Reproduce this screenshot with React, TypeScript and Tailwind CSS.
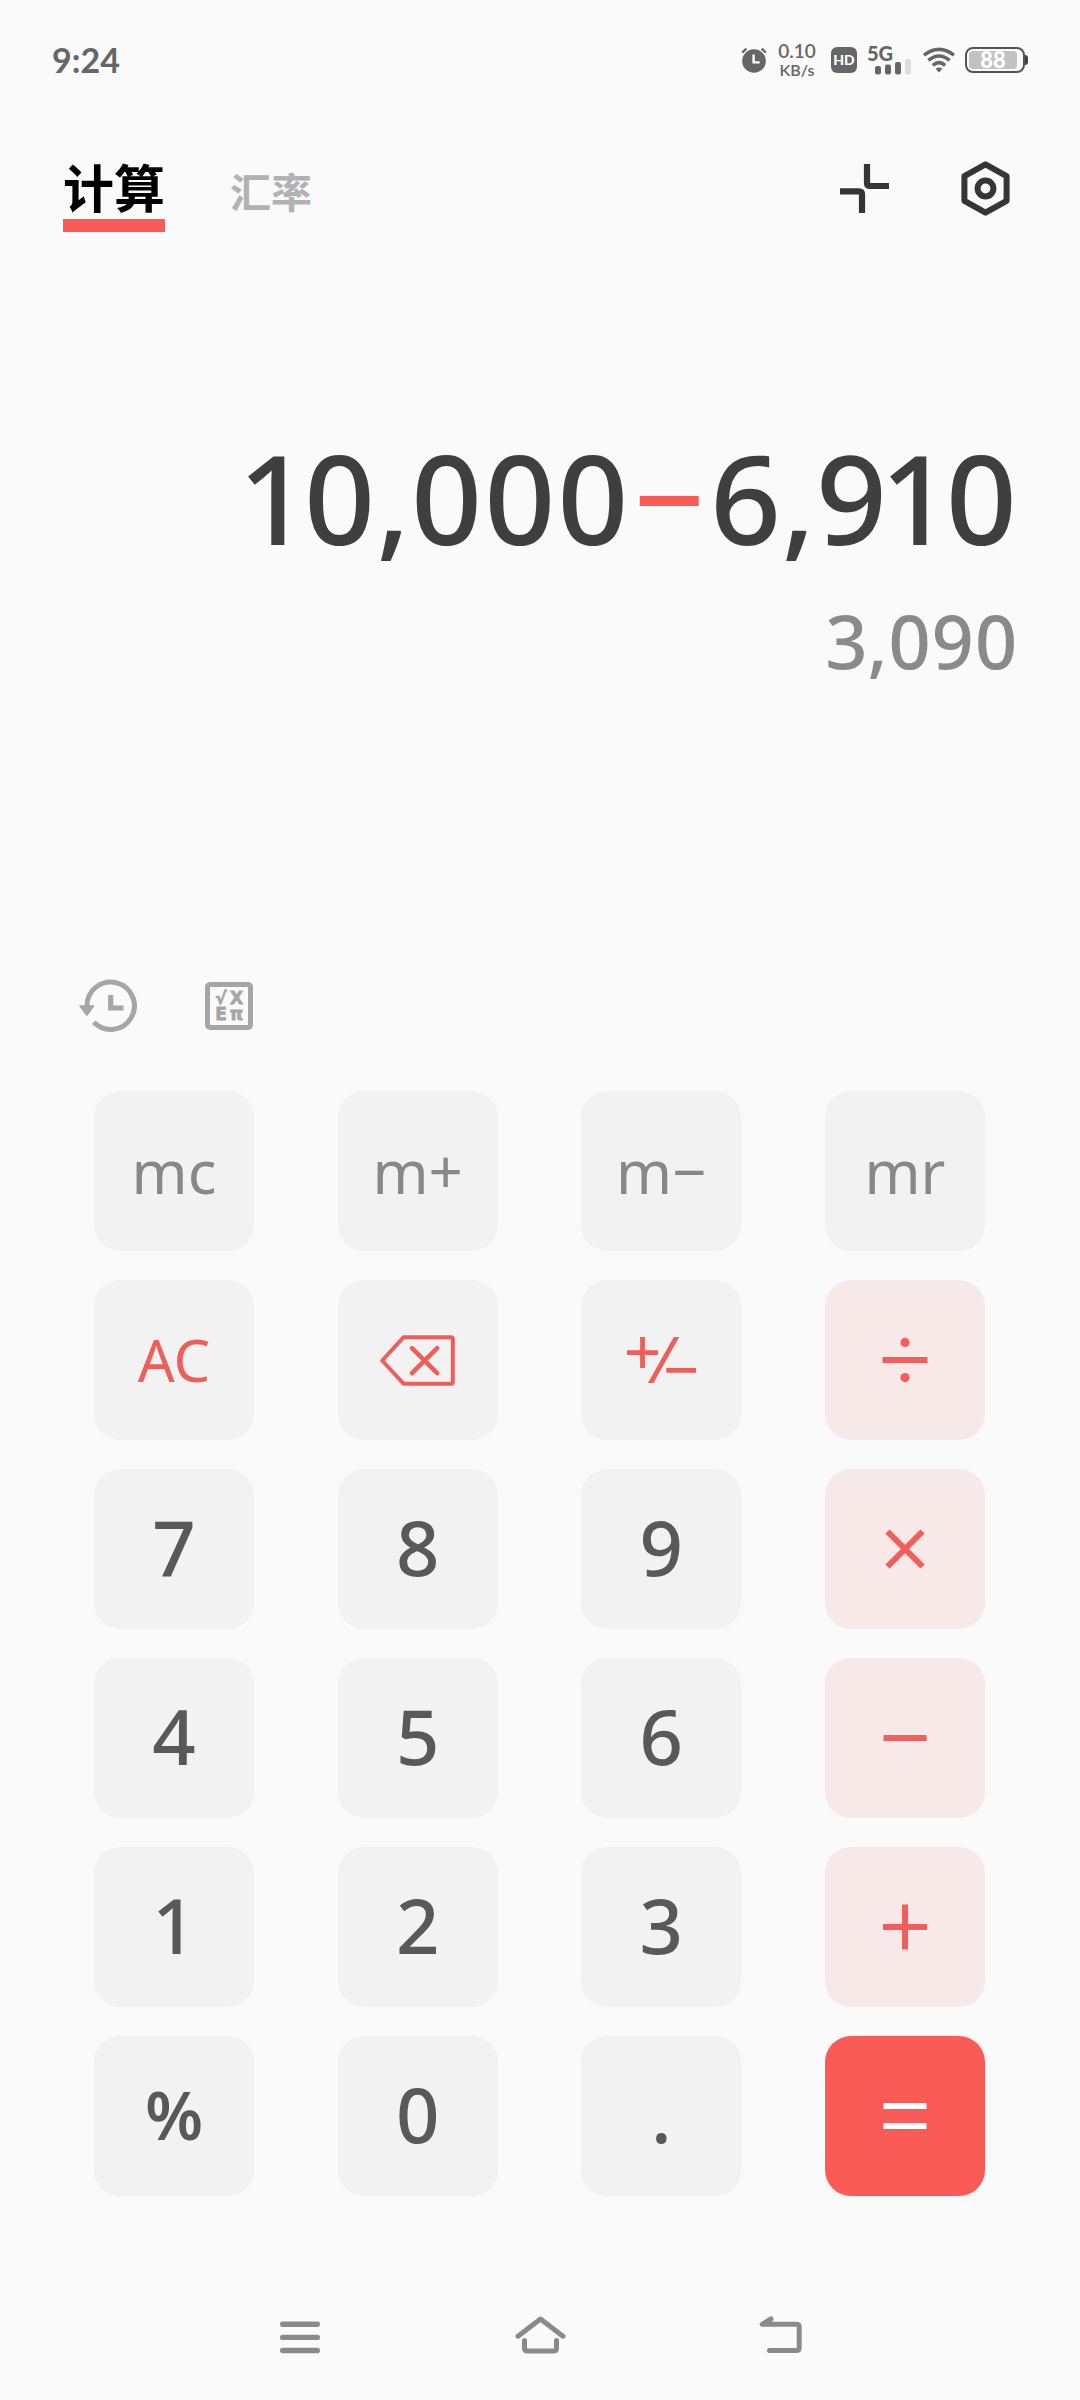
import type { ReactNode } from "react"
import clsx from "clsx"

type KeyKind = "memory" | "action" | "digit" | "percent" | "operator" | "equals"

type CalcKey = {
    label: string
    kind: KeyKind
    content?: ReactNode
}

const keyStyles: Record<KeyKind, string> = {
    memory: "bg-[#f2f2f2] text-[#888888] text-[60px]",
    action: "bg-[#f2f2f2] text-[#ee5e5b] text-[58px]",
    digit: "bg-[#f2f2f2] text-[#595959] font-medium text-[76px] pb-1",
    percent: "bg-[#f2f2f2] text-[#595959] font-semibold text-[66px] pb-1",
    operator: "bg-[#f7e9e8] text-[#f25e5b]",
    equals: "bg-[#fb5b57] text-white",
}

function Sign({ d, children }: { d: string; children?: ReactNode }) {
    return (
        <svg width="46" height="46" viewBox="0 0 46 46" fill="none" stroke="currentColor" strokeWidth="6" aria-hidden="true">
            <path d={d} />
            {children}
        </svg>
    )
}

function BackspaceIcon() {
    return (
        <svg width="75" height="51" viewBox="0 0 75 51" fill="none" stroke="currentColor" strokeWidth="4" strokeLinecap="round" strokeLinejoin="round" aria-hidden="true">
            <path d="M2.2 25.5 23.5 2.3H71Q72.8 2.3 72.8 4V47Q72.8 48.7 71 48.7H23.5Z" />
            <path d="M32 13.2 57.2 38.2M57.2 13.2 32 38.2" strokeWidth="4.6" />
        </svg>
    )
}

function PlusMinusIcon() {
    return (
        <svg width="69" height="46" viewBox="0 0 69 46" fill="none" stroke="currentColor" strokeWidth="4.8" aria-hidden="true">
            <path d="M0 15.7H31M15.5 0V31M39.3 33.3H69M50.6-2 22.6 48" />
        </svg>
    )
}

const keys: CalcKey[] = [
    { label: "mc", kind: "memory" },
    { label: "m+", kind: "memory" },
    { label: "m−", kind: "memory" },
    { label: "mr", kind: "memory" },
    { label: "AC", kind: "action" },
    { label: "退格", kind: "action", content: <BackspaceIcon /> },
    { label: "正负", kind: "action", content: <PlusMinusIcon /> },
    {
        label: "除",
        kind: "operator",
        content: (
            <Sign d="M0.5 23H45.5">
                <circle cx="23" cy="5.4" r="4.6" fill="currentColor" stroke="none" />
                <circle cx="23" cy="40.6" r="4.6" fill="currentColor" stroke="none" />
            </Sign>
        ),
    },
    { label: "7", kind: "digit" },
    { label: "8", kind: "digit" },
    { label: "9", kind: "digit" },
    { label: "乘", kind: "operator", content: <Sign d="M5.5 5.5 40.5 40.5M40.5 5.5 5.5 40.5" /> },
    { label: "4", kind: "digit" },
    { label: "5", kind: "digit" },
    { label: "6", kind: "digit" },
    { label: "减", kind: "operator", content: <Sign d="M1.5 23H44.5" /> },
    { label: "1", kind: "digit" },
    { label: "2", kind: "digit" },
    { label: "3", kind: "digit" },
    { label: "加", kind: "operator", content: <Sign d="M1 23H45M23 0.5V45.5" /> },
    { label: "%", kind: "percent" },
    { label: "0", kind: "digit" },
    { label: ".", kind: "digit" },
    { label: "等于", kind: "equals", content: <Sign d="M1.5 13H44.5M1.5 33H44.5" /> },
]

function StatusBar() {
    return (
        <div className="h-[120px] px-[52px] flex items-center justify-between text-[#666666] font-['Lato',sans-serif]">
            <span className="text-[34px] leading-10 font-bold">9:24</span>
            <div className="flex items-center">
                <svg width="26" height="26" viewBox="0 0 26 26" aria-label="闹钟">
                    <circle cx="13" cy="14" r="11.8" fill="#666666" />
                    <path d="M1.2 5.6 5.4 1.6M24.8 5.6 20.6 1.6" stroke="#666666" strokeWidth="2.2" />
                    <path d="M12.6 7.5V15.4H18.6" fill="none" stroke="#ffffff" strokeWidth="2.4" />
                </svg>
                <div className="w-10 ml-[10px] flex flex-col items-center font-semibold">
                    <span className="text-[19px] leading-5">0.10</span>
                    <span className="text-[16px] leading-[18px]">KB/s</span>
                </div>
                <span className="ml-[14px] w-[26px] h-[26px] rounded-md bg-[#666666] text-white text-[14px] leading-none font-black flex items-center justify-center">HD</span>
                <div className="ml-[10px] w-11 h-[30px] relative">
                    <span className="absolute left-0 top-0 text-[20px] leading-4 font-black">5G</span>
                    <svg className="absolute right-0 bottom-0" width="36" height="17" viewBox="0 0 36 17" aria-label="信号">
                        <rect x="0" y="8" width="6" height="8.500" rx="2" fill="#666666" />
                        <rect x="10" y="6.500" width="6" height="10" rx="2" fill="#666666" />
                        <rect x="20" y="4" width="6" height="12.500" rx="2" fill="#666666" />
                        <rect x="30" y="1" width="6" height="15.500" rx="2" fill="#dddddd" />
                    </svg>
                </div>
                <svg className="ml-3" width="32" height="26" viewBox="0 0 32 26" fill="none" stroke="#666666" strokeWidth="3.600" aria-label="无线网络">
                    <path d="M1 8.200Q16-3.600 31 8.200M5.400 13.400Q16 4.600 26.600 13.400M9.800 18.400Q16 13 22.200 18.400" />
                    <path d="M12.600 21.800Q16 19.400 19.400 21.800L16 25.400Z" fill="#666666" stroke="none" />
                </svg>
                <div className="ml-[10px] flex items-center">
                    <div className="w-[60px] h-[26px] rounded-lg border-2 border-[#555555] p-[2px]">
                        <div className="w-12 h-full rounded bg-[#c2c2c2] text-white text-[22px] leading-[18px] font-black text-center">88</div>
                    </div>
                    <div className="w-[3px] h-[10px] rounded-r-sm bg-[#444444]" />
                </div>
            </div>
        </div>
    )
}

function Header() {
    return (
        <header className="pt-[39px] pl-[63px] pr-[70px] flex items-start justify-between">
            <nav className="flex items-baseline gap-[65px] font-bold font-['Noto_Sans_CJK_SC',sans-serif]">
                <button className="pb-[6px] text-[51px] leading-[54px] text-black border-b-[13px] border-[#fb5b57]">计算</button>
                <button className="text-[41px] leading-[54px] text-[#b2b2b2]">汇率</button>
            </nav>
            <div className="h-[58px] flex items-center gap-[72px] text-[#353535]">
                <button aria-label="小窗">
                    <svg width="49" height="49" viewBox="0 0 49 49" fill="none" stroke="currentColor" strokeWidth="6.2">
                        <path d="M27 0V19Q27 22 30 22H49M0 27.300H19Q22 27.300 22 30.300V49" />
                    </svg>
                </button>
                <button aria-label="设置">
                    <svg width="49" height="55" viewBox="0 0 49 55" fill="none" stroke="currentColor" strokeWidth="6" strokeLinejoin="round">
                        <path d="M24.500 3.400 45.600 15.200V39.800L24.500 51.600 3.400 39.800V15.200Z" />
                        <circle cx="24.500" cy="27.500" r="7.900" />
                    </svg>
                </button>
            </div>
        </header>
    )
}

function Toolbar() {
    return (
        <div className="pl-[79px] flex items-center gap-[68px] text-[#a6a6a6]">
            <button aria-label="历史记录">
                <svg width="58" height="54" viewBox="0 0 58 54" fill="none" stroke="currentColor" strokeWidth="5">
                    <path d="M8 27.500V26.700A23.700 23.700 0 1 1 14.800 43.300" />
                    <path d="M.6 26.200H15.200Q15.800 26.200 15.500 27L8.600 36.400Q7.800 37.200 7 36.400L.2 27Q0 26.200.6 26.200Z" fill="currentColor" stroke="none" />
                    <path d="M31.700 16V29H44.500" strokeWidth="5.200" />
                </svg>
            </button>
            <button aria-label="科学计算">
                <svg width="48" height="48" viewBox="0 0 48 48" fill="currentColor" stroke="currentColor" className="font-['DejaVu_Sans',sans-serif] font-bold text-[17px]">
                    <rect x="2.500" y="2.500" width="43" height="43" rx="2.500" fill="none" strokeWidth="5" />
                    <g strokeWidth="0.8">
                        <text x="16" y="22" textAnchor="middle">√</text>
                        <text x="31.500" y="22" textAnchor="middle">X</text>
                        <text x="16" y="38" textAnchor="middle">E</text>
                        <text x="31.500" y="38" textAnchor="middle">π</text>
                    </g>
                </svg>
            </button>
        </div>
    )
}

function NavBar() {
    return (
        <nav className="mt-[74px] h-[130px] flex items-center justify-center text-[#8a8a8a]">
            <button aria-label="最近任务" className="w-60 flex justify-center">
                <svg width="40" height="38" viewBox="0 0 40 38" fill="none" stroke="currentColor" strokeWidth="5.400" strokeLinecap="round">
                    <path d="M2.700 8.300H37.300M2.700 21.400H37.300M2.700 34.500H37.300" />
                </svg>
            </button>
            <button aria-label="主屏幕" className="w-60 flex justify-center">
                <svg width="51" height="38" viewBox="0 0 51 38" fill="none" stroke="currentColor" strokeWidth="5" strokeLinecap="round" strokeLinejoin="round">
                    <path d="M3 20.200 25.500 3 48 20.200M9.500 24.500V32Q9.500 35 12.500 35H38.500Q41.500 35 41.500 32V24.500" />
                </svg>
            </button>
            <button aria-label="返回" className="w-60 flex justify-center">
                <svg width="43" height="38" viewBox="0 0 43 38" fill="none" stroke="currentColor" strokeWidth="5" strokeLinecap="round" strokeLinejoin="round">
                    <path d="M12 3 3.200 8.300H37.500Q40.200 8.300 40.200 11V31.800Q40.200 34.500 37.500 34.500H10.500" />
                </svg>
            </button>
        </nav>
    )
}

export default function App() {
    return (
        <main className="min-h-screen bg-[#fafafa] flex flex-col font-['Noto_Sans',sans-serif]">
            <StatusBar />
            <Header />

            <section className="flex-1 pt-[185px] pr-[62px] pb-16 flex flex-col items-end font-medium proportional-nums">
                <p className="text-[124px] leading-[160px] text-[#3f3f3f] flex">
                    <span>10,000</span>
                    <span className="w-20 text-center text-[#fb5b57]">−</span>
                    <span>6,910</span>
                </p>
                <p className="mt-4 text-[74px] leading-[96px] text-[#8a8a8a]">3,090</p>
            </section>

            <Toolbar />

            <section className="mt-[58px] pl-[94px] pr-[95px] grid grid-cols-[repeat(4,160px)] justify-between gap-y-[29px]">
                {keys.map((key) => (
                    <button
                        key={key.label}
                        aria-label={key.label}
                        className={clsx("h-40 rounded-[26px] flex items-center justify-center leading-none", keyStyles[key.kind])}
                    >
                        {key.content ?? key.label}
                    </button>
                ))}
            </section>

            <NavBar />
        </main>
    )
}
